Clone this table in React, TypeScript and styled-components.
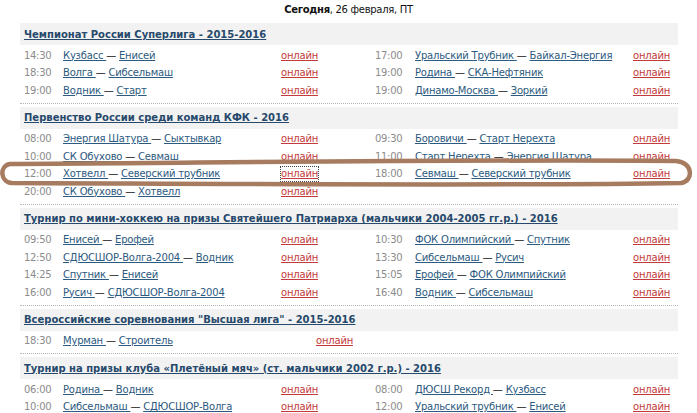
import React from "react";
import styled, { createGlobalStyle, css } from "styled-components";

const GlobalStyle = createGlobalStyle`
  html, body { margin: 0; padding: 0; background: #fff; }
  body { font-family: "DejaVu Sans", Verdana, sans-serif; }
`;

type Match = { time: string; home: string; away: string; focus?: boolean };
type Section = { title: string; rows: [Match, Match?][]; single?: boolean };

const sections: Section[] = [
  {
    title: "Чемпионат России Суперлига - 2015-2016",
    rows: [
      [{ time: "14:30", home: "Кузбасс", away: "Енисей" }, { time: "17:00", home: "Уральский Трубник", away: "Байкал-Энергия" }],
      [{ time: "18:30", home: "Волга", away: "Сибсельмаш" }, { time: "19:00", home: "Родина", away: "СКА-Нефтяник" }],
      [{ time: "19:00", home: "Водник", away: "Старт" }, { time: "19:00", home: "Динамо-Москва", away: "Зоркий" }],
    ],
  },
  {
    title: "Первенство России среди команд КФК - 2016",
    rows: [
      [{ time: "08:00", home: "Энергия Шатура", away: "Сыктывкар" }, { time: "09:30", home: "Боровичи", away: "Старт Нерехта" }],
      [{ time: "10:00", home: "СК Обухово", away: "Севмаш" }, { time: "11:00", home: "Старт Нерехта", away: "Энергия Шатура" }],
      [{ time: "12:00", home: "Хотвелл", away: "Северский трубник", focus: true }, { time: "18:00", home: "Севмаш", away: "Северский трубник" }],
      [{ time: "20:00", home: "СК Обухово", away: "Хотвелл" }],
    ],
  },
  {
    title: "Турнир по мини-хоккею на призы Святейшего Патриарха (мальчики 2004-2005 гг.р.) - 2016",
    rows: [
      [{ time: "09:50", home: "Енисей", away: "Ерофей" }, { time: "10:30", home: "ФОК Олимпийский", away: "Спутник" }],
      [{ time: "12:50", home: "СДЮСШОР-Волга-2004", away: "Водник" }, { time: "13:30", home: "Сибсельмаш", away: "Русич" }],
      [{ time: "14:25", home: "Спутник", away: "Енисей" }, { time: "15:05", home: "Ерофей", away: "ФОК Олимпийский" }],
      [{ time: "16:00", home: "Русич", away: "СДЮСШОР-Волга-2004" }, { time: "16:40", home: "Водник", away: "Сибсельмаш" }],
    ],
  },
  {
    title: "Всероссийские соревнования \"Высшая лига\" - 2015-2016",
    single: true,
    rows: [[{ time: "18:30", home: "Мурман", away: "Строитель" }]],
  },
  {
    title: "Турнир на призы клуба «Плетёный мяч» (ст. мальчики 2002 г.р.) - 2016",
    rows: [
      [{ time: "06:00", home: "Родина", away: "Водник" }, { time: "08:00", home: "ДЮСШ Рекорд", away: "Кузбасс" }],
      [{ time: "10:00", home: "Сибсельмаш", away: "СДЮСШОР-Волга" }, { time: "12:00", home: "Уральский трубник", away: "Енисей" }],
    ],
  },
];

const Page = styled.div`
  position: relative;
  width: 697px;
  height: 413px;
  overflow: hidden;
  background: #fff;
`;

const DateTitle = styled.div`
  height: 23px;
  padding-top: 3px;
  box-sizing: border-box;
  text-align: center;
  font-size: 10px;
  letter-spacing: -0.3px;
  line-height: 14px;
  color: #111;
  b { font-weight: bold; }
`;

const Board = styled.div`
  margin-left: 20px;
  width: 658px;
`;

const Block = styled.section`
  padding-bottom: 3px;
  border-bottom: 1px dotted #b5b5b5;
  margin-bottom: 3px;
`;

const Heading = styled.div`
  height: 22px;
  background: #f2f2f2;
  display: flex;
  align-items: center;
  padding-left: 4px;
  margin-bottom: 2px;
`;

const HeadLink = styled.a`
  font-weight: bold;
  font-size: 10px;
  letter-spacing: 0px;
  color: #27496b;
  text-decoration: underline;
  cursor: pointer;
`;

const Row = styled.div<{ $single?: boolean }>`
  display: grid;
  grid-template-columns: ${(p) =>
    p.$single ? "39px 253px 1fr" : "39px 218px 69px 65px 218px 45px"};
  padding-left: 4px;
  height: 17.5px;
  align-items: center;
  font-size: 10px;
  line-height: 14px;
  white-space: nowrap;
`;

const Time = styled.span<{ $right?: boolean }>`
  color: #8c8c8c;
  letter-spacing: -0.3px;
  ${(p) => p.$right && css`padding-left: 25px;`}
`;

const Teams = styled.span`
  color: #111;
  letter-spacing: -0.2px;
`;

const TeamLink = styled.a`
  color: #2c5a80;
  text-decoration: underline;
  cursor: pointer;
`;

const Online = styled.a<{ $focus?: boolean }>`
  justify-self: start;
  color: #c23a3a;
  text-decoration: underline;
  letter-spacing: -0.2px;
  cursor: pointer;
  ${(p) => p.$focus && css`outline: 1px dotted #444; outline-offset: 0px;`}
`;

const Mark = styled.svg`
  position: absolute;
  left: 0;
  top: 0;
  pointer-events: none;
`;

function MatchCells({ m, right }: { m: Match; right?: boolean }) {
  return (
    <>
      <Time $right={right}>{m.time}</Time>
      <Teams>
        <TeamLink>{m.home + " "}</TeamLink>— <TeamLink>{m.away}</TeamLink>
      </Teams>
      <Online $focus={m.focus}>онлайн</Online>
    </>
  );
}

export default function App() {
  return (
    <Page>
      <GlobalStyle />
      <DateTitle>
        <b>Сегодня</b>, 26 февраля, ПТ
      </DateTitle>
      <Board>
        {sections.map((s, i) => (
          <Block key={i}>
            <Heading>
              <HeadLink>{s.title}</HeadLink>
            </Heading>
            {s.rows.map((r, j) => (
              <Row key={j} $single={s.single}>
                <MatchCells m={r[0]} />
                {r[1] ? <MatchCells m={r[1]} right /> : null}
              </Row>
            ))}
          </Block>
        ))}
      </Board>
      <Mark width="697" height="413" viewBox="0 0 697 413">
        <path
          d="M 10 164 C 200 163, 480 159, 676 161 C 693 162, 694 181, 681 183 C 520 186, 250 184, 12 183 C 0 182, -1 166, 10 164 Z"
          fill="none"
          stroke="#a67b5f"
          strokeWidth="4.5"
          strokeLinecap="round"
        />
      </Mark>
    </Page>
  );
}
